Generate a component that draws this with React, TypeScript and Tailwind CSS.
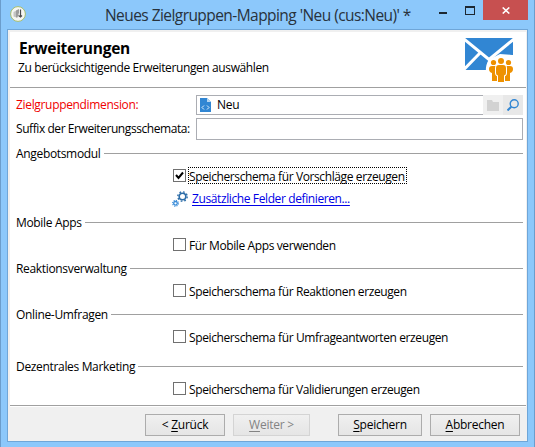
import type { ReactNode } from "react";

function AppIcon() {
  return (
    <svg className="h-4 w-4" viewBox="0 0 16 16">
      <circle cx="8" cy="8" r="7.4" fill="#f6f6f2" stroke="#a5bd6c" strokeWidth="1" />
      <path d="M3.500 6l3-1.500v7l-3-1z" fill="#c4c4c2" />
      <path d="M6 4.500l3-1.500v3.500l-1.500 5H6z" fill="#9c9c9c" />
      <path d="M10.500 3.500v6.500M8.500 9.500l2 1.500 1.500-1.500" fill="none" stroke="#4a4a4c" strokeWidth="1.200" />
    </svg>
  );
}

function MailIcon() {
  return (
    <svg className="h-[45px] w-[49px]" viewBox="0 0 49 45">
      <path d="M0 0h48v32H0z" fill="#3186d3" />
      <path d="M-1 1L24 21.500L49 1M-1 31.500L15 15" fill="none" stroke="#fff" strokeWidth="3" />
      <path d="M48 17L35 16L24 21.500C20 27 21 33 21 33H49z" fill="#fff" />
      <path d="M37.500 14.500L48 7v10z" fill="#3186d3" />
      <g fill="#ee9100">
        <circle cx="28.500" cy="24.500" r="2.600" />
        <circle cx="43.500" cy="24.500" r="2.600" />
        <path d="M24 31q0-3 3-3h5v15h-5v-8q-3-1-3-4zM48 31q0-3-3-3h-5v15h5v-8q3-1 3-4z" />
      </g>
      <g fill="#ee9100" stroke="#fff" strokeWidth="2" paintOrder="stroke">
        <path d="M31 30q0-3 3-3h4q3 0 3 3v5q0 2-2 2.500v6.500h-6v-6.500q-2-.5-2-2.500z" />
        <circle cx="36" cy="23" r="3" />
      </g>
    </svg>
  );
}

function SchemaIcon() {
  return (
    <svg className="h-[14px] w-[11px]" viewBox="0 0 11 14">
      <path d="M0 0h7l4 4v10H0z" fill="#3186d3" />
      <path d="M7 0v4h4z" fill="#b6d5f1" />
      <path d="M4 7.500L2 9.500l2 2M7 7.500l2 2-2 2" fill="none" stroke="#e3f1fc" strokeWidth="1" />
    </svg>
  );
}

function GearsIcon() {
  return (
    <svg className="h-4 w-4" viewBox="0 0 16 16" fill="none">
      <circle cx="10.500" cy="5.500" r="3.300" stroke="#2d6da8" strokeWidth="1.600" />
      <circle cx="10.500" cy="5.500" r="4.700" stroke="#2d6da8" strokeWidth="1.400" strokeDasharray="1.700 1.990" />
      <circle cx="3.500" cy="12.300" r="1.800" stroke="#3a8cd8" strokeWidth="1.300" />
      <circle cx="3.500" cy="12.300" r="2.900" stroke="#3a8cd8" strokeWidth="1.100" strokeDasharray="1.200 1.077" />
    </svg>
  );
}

function CheckRow({ className, checked, text }: { className: string; checked?: boolean; text: string }) {
  return (
    <div className={`flex h-[17px] items-center pl-[163px] ${className}`}>
      <span className="h-[13px] w-[13px] border border-[#707070] bg-white">
        {checked && (
          <svg className="h-[11px] w-[11px]" viewBox="0 0 11 11">
            <path d="M2 5l2.500 3L9 2.500" fill="none" stroke="#000" strokeWidth="2" />
          </svg>
        )}
      </span>
      <span className={`ml-[2px] h-[17px] border border-dotted pr-px leading-[17px] ${checked ? "border-black" : "border-transparent"}`}>
        {text}
      </span>
    </div>
  );
}

function Section({ title, height, children }: { title: string; height: string; children: ReactNode }) {
  return (
    <section className={height}>
      <div className="flex h-4 items-center pr-[3px] pl-[6px]">
        <h2 className="h-4 leading-[17px] tracking-[-0.33px]">{title}</h2>
        <span className="ml-[3px] h-px flex-1 bg-[#a0a0a0]" />
      </div>
      {children}
    </section>
  );
}

function PushButton({ letter, before, rest, className }: { letter: string; before?: string; rest: string; className: string }) {
  return (
    <button className={`h-[22px] border bg-linear-to-b from-[#f0f0f0] to-[#e5e5e5] leading-5 tracking-[-0.25px] whitespace-pre ${className}`}>
      {before}
      <span className="underline underline-offset-2">{letter}</span>
      {rest}
    </button>
  );
}

export default function App() {
  return (
    <div className="flex h-[447px] w-[535px] flex-col border-x border-[#6b9dcc] bg-[#8cc8fb] pr-[6px] pl-[6px] font-['Open_Sans','Noto_Sans',sans-serif] text-[12px] tracking-[-0.39px] whitespace-nowrap text-black">
      <header className="flex h-[29px] shrink-0 items-start">
        <div className="mt-[6px] ml-[3px]"><AppIcon /></div>
        <h1 className="mt-[4px] ml-[79px] w-[334px] text-[15.5px] leading-[22px] tracking-[-0.56px] text-[#28323c]">Neues Zielgruppen-Mapping 'Neu (cus:Neu)' *</h1>
        <span className="mt-3 h-[2px] w-2 shrink-0 bg-[#1c2731]" />
        <span className="mt-[6px] ml-[18px] h-[9px] w-[10px] shrink-0 border border-t-2 border-[#1c2731]" />
        <button className="-mr-px ml-2 flex h-5 w-[45px] shrink-0 items-center justify-center bg-[#c75050]">
          <svg className="h-[7px] w-2" viewBox="0 0 8 7"><path d="M.7.5l6.600 6M7.300.5l-6.600 6" stroke="#fff" strokeWidth="1.600" /></svg>
        </button>
      </header>

      <main className="flex h-[413px] shrink-0 flex-col border border-[#6fa6d8] bg-[#f0f0f0] pt-[2px] pr-px pl-[2px]">
        <div className="flex h-14 shrink-0 justify-between border-b border-[#a0a0a0] bg-white pr-3 pl-2">
          <div>
            <h1 className="mt-[6px] ml-px text-[15.5px] leading-5 font-bold tracking-[-0.25px]">Erweiterungen</h1>
            <p className="leading-5">Zu berücksichtigende Erweiterungen auswählen</p>
          </div>
          <div className="mt-[6px]"><MailIcon /></div>
        </div>

        <div className="h-[317px] shrink-0 bg-white">
          <div className="flex h-[27px] items-end pr-[3px] pl-[6px]">
            <label className="w-[180px] leading-5 tracking-[-0.33px] text-[#f00000]">Zielgruppendimension:</label>
            <div className="flex h-5 flex-1 items-center border border-r-0 border-[#abadb3] pl-[3px]">
              <SchemaIcon />
              <span className="ml-[6px] tracking-[-0.2px]">Neu</span>
            </div>
            <span className="flex h-5 w-5 items-center justify-center bg-[#f0f0f0]">
              <svg className="h-3 w-3" viewBox="0 0 12 12"><path d="M0 1h5l1 2h6v9H0z" fill="#d2d2d2" /></svg>
            </span>
            <span className="flex h-5 w-5 items-center justify-center bg-[#e8e8e8]">
              <svg className="h-3 w-3" viewBox="0 0 12 12" fill="none" stroke="#3186d3">
                <circle cx="7.200" cy="4.800" r="4" strokeWidth="1.400" /><path d="M4.300 7.700L.5 11.500" strokeWidth="2" />
              </svg>
            </span>
          </div>
          <div className="mt-[3px] flex h-[22px] items-center pr-[3px] pl-[6px]">
            <label className="w-[180px] leading-5 tracking-[-0.43px]">Suffix der Erweiterungsschemata:</label>
            <div className="h-[22px] flex-1 border border-[#abadb3]" />
          </div>

          <div className="mt-[5px]">
            <Section title="Angebotsmodul" height="h-[69px]">
              <CheckRow className="mt-[6px]" checked text="Speicherschema für Vorschläge erzeugen" />
              <div className="mt-[7px] flex h-4 items-center pl-[162px]">
                <GearsIcon />
                <a className="ml-1 text-[#0000e6] underline underline-offset-2">Zusätzliche Felder definieren...</a>
              </div>
            </Section>
            <Section title="Mobile Apps" height="h-[46px]"><CheckRow className="mt-[6px]" text="Für Mobile Apps verwenden" /></Section>
            <Section title="Reaktionsverwaltung" height="h-[46px]"><CheckRow className="mt-[6px]" text="Speicherschema für Reaktionen erzeugen" /></Section>
            <Section title="Online-Umfragen" height="h-[52px]"><CheckRow className="mt-[6px]" text="Speicherschema für Umfrageantworten erzeugen" /></Section>
            <Section title="Dezentrales Marketing" height="h-[39px]"><CheckRow className="mt-[6px]" text="Speicherschema für Validierungen erzeugen" /></Section>
          </div>
        </div>

        <footer className="flex h-9 shrink-0 justify-end border-t border-[#a0a0a0] pr-[6px] shadow-[inset_0_1px_0_#fff]">
          <div className="mt-2 flex">
            <PushButton before="< " letter="Z" rest="urück" className="w-20 border-[#acacac]" />
            <PushButton letter="W" rest="eiter >" className="ml-2 w-[77px] border-[#d4d4d4] text-[#838383]" />
            <PushButton letter="S" rest="peichern" className="ml-7 w-[84px] border-[#acacac]" />
            <PushButton letter="A" rest="bbrechen" className="ml-2 w-[90px] border-[#acacac]" />
          </div>
        </footer>
      </main>
    </div>
  );
}
